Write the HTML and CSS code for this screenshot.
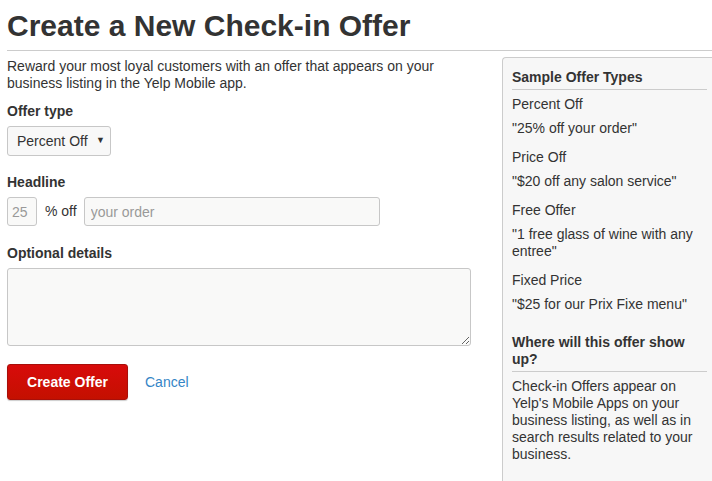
FILE: index.html
```html
<!DOCTYPE html>
<html lang="en">
<head>
<meta charset="utf-8">
<title>Create a New Check-in Offer</title>
<link rel="stylesheet" href="styles.css">
</head>
<body>
<div class="page">
  <h1 class="title">Create a New Check-in Offer</h1>
  <div class="rule"></div>
  <div class="layout">
    <form class="main">
      <p class="intro">Reward your most loyal customers with an offer that appears on your business listing in the Yelp Mobile app.</p>
      <div class="field">
        <label class="label">Offer type</label>
        <div class="select-wrap">
          <select class="select">
            <option>Percent Off</option>
            <option>Price Off</option>
            <option>Free Offer</option>
            <option>Fixed Price</option>
          </select>
          <span class="caret">&#9660;</span>
        </div>
      </div>
      <div class="field field-headline">
        <label class="label">Headline</label>
        <div class="headline-row">
          <input class="input input-num" type="text" placeholder="25">
          <span class="unit">% off</span>
          <input class="input input-text" type="text" placeholder="your order">
        </div>
      </div>
      <div class="field">
        <label class="label">Optional details</label>
        <textarea class="textarea"></textarea>
      </div>
      <div class="actions">
        <button class="btn" type="button">Create Offer</button>
        <a class="cancel" href="#">Cancel</a>
      </div>
    </form>
    <aside class="sidebar">
      <h3 class="side-title">Sample Offer Types</h3>
      <dl class="samples">
        <dt>Percent Off</dt>
        <dd>"25% off your order"</dd>
        <dt>Price Off</dt>
        <dd>"$20 off any salon service"</dd>
        <dt>Free Offer</dt>
        <dd>"1 free glass of wine with any entree"</dd>
        <dt>Fixed Price</dt>
        <dd>"$25 for our Prix Fixe menu"</dd>
      </dl>
      <h3 class="side-title side-title-2">Where will this offer show up?</h3>
      <p class="side-text">Check-in Offers appear on Yelp's Mobile Apps on your business listing, as well as in search results related to your business.</p>
    </aside>
  </div>
</div>
</body>
</html>
```

FILE: styles.css
```css
html, body {
  margin: 0;
  padding: 0;
  background: #fff;
  overflow: hidden;
}
body {
  font-family: "Liberation Sans", Arial, sans-serif;
  font-size: 14px;
  line-height: 17px;
  color: #333;
}
.page {
  width: 710px;
  padding-left: 7px;
}
.title {
  margin: 8px 0 6px;
  font-size: 30px;
  line-height: 36px;
  font-weight: bold;
  color: #333;
}
.rule {
  border-top: 1px solid #ccc;
}
.layout {
  display: grid;
  grid-template-columns: 464px 215px;
  column-gap: 31px;
  align-items: start;
}
.main {
  margin: 0;
}
.intro {
  margin: 7px 0 12px;
  line-height: 16.5px;
}
.field {
  margin-bottom: 18px;
}
.field-headline {
  margin-bottom: 19px;
}
.label {
  display: block;
  font-weight: bold;
  margin-bottom: 6px;
}
.select-wrap {
  position: relative;
  display: inline-block;
}
.select {
  -webkit-appearance: none;
  appearance: none;
  width: 104px;
  height: 30px;
  padding: 0 0 0 9px;
  margin: 0;
  font-family: inherit;
  font-size: 14px;
  color: #333;
  background: #f8f8f8;
  border: 1px solid #c7c7c7;
  border-radius: 3px;
  display: block;
}
.caret {
  position: absolute;
  right: 6px;
  top: 9px;
  font-size: 9px;
  line-height: 10px;
  color: #333;
  pointer-events: none;
}
.headline-row {
  display: flex;
  align-items: center;
}
.input {
  box-sizing: border-box;
  height: 29px;
  margin: 0;
  font-family: inherit;
  font-size: 14px;
  color: #333;
  background: #f9f9f8;
  border: 1px solid #c7c7c7;
  border-radius: 3px;
  padding: 0 6px;
}
.input::placeholder {
  color: #999;
}
.input-num {
  width: 30px;
  padding: 0 4px;
}
.unit {
  margin: 0 7px 0 8px;
}
.input-text {
  width: 296px;
}
.textarea {
  display: block;
  box-sizing: border-box;
  width: 464px;
  height: 78px;
  margin: 0;
  background: #f9f9f8;
  border: 1px solid #c7c7c7;
  border-radius: 3px;
  font-family: inherit;
  font-size: 14px;
}
.actions {
  display: flex;
  align-items: center;
  gap: 17px;
}
.btn {
  width: 121px;
  height: 36px;
  padding: 0;
  font-family: inherit;
  font-size: 14px;
  font-weight: bold;
  color: #fff;
  background: linear-gradient(#d80b0b, #c41000);
  border: 1px solid #a80f0a;
  border-radius: 3px;
  box-shadow: 0 1px 1px rgba(0,0,0,0.2);
}
.cancel {
  color: #3585c6;
  text-decoration: none;
}
.sidebar {
  box-sizing: border-box;
  margin-top: 6px;
  min-height: 424px;
  padding: 11px 10px 10px 9px;
  background: #f7f7f7;
  border-left: 1px solid #ccc;
  border-top: 1px solid #ccc;
  border-top-left-radius: 4px;
}
.side-title {
  margin: 0;
  padding-bottom: 3px;
  font-size: 14px;
  line-height: 17px;
  font-weight: bold;
  border-bottom: 1px solid #ccc;
  margin-bottom: 6px;
}
.side-title-2 {
  margin-top: 21px;
}
.samples {
  margin: 0;
}
.samples dt {
  margin: 0 0 7px;
}
.samples dd {
  margin: 0 0 12px;
}
.samples dd:last-child {
  margin-bottom: 0;
}
.side-text {
  margin: 0;
}
```
